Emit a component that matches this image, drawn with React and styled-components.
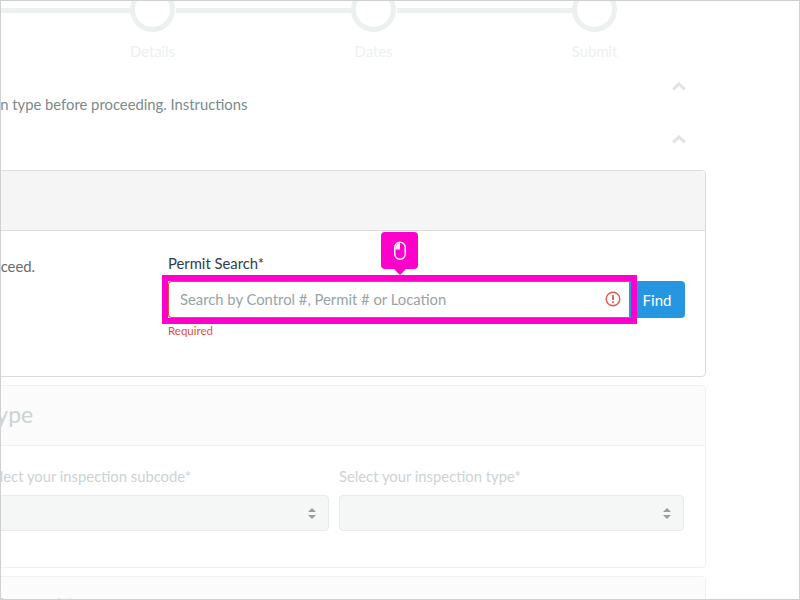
import React from "react";
import styled, { createGlobalStyle } from "styled-components";

const Global = createGlobalStyle`
  html, body { margin: 0; padding: 0; background: #fff; }
  body { font-family: Lato, "Liberation Sans", sans-serif; font-size: 14.8px; }
  * { box-sizing: border-box; }
`;

const Frame = styled.div`
  position: relative;
  width: 800px;
  height: 600px;
  overflow: hidden;
  border: 1px solid #d0d0d0;
  background: #fff;
`;
const Page = styled.div`
  width: 961px;
  margin-left: -256px;
  margin-top: -14px;
`;
const Stepper = styled.div`
  display: flex;
  padding-left: 76px;
`;
const Step = styled.div`
  position: relative;
  flex: 0 0 221px;
  display: flex;
  flex-direction: column;
  align-items: center;
  color: #ecf0f1;
  line-height: 20px;
`;
const Circle = styled.div`
  width: 45px;
  height: 45px;
  border-radius: 50%;
  border: 5px solid #ecf0f1;
  margin-bottom: 9px;
`;
const Connector = styled.div`
  position: absolute;
  left: calc(50% + 23px);
  width: 176px;
  top: 21px;
  height: 5px;
  background: #ecf0f1;
`;
const Accordion = styled.div`
  display: flex;
  align-items: flex-start;
  height: ${p => p.$height}px;
  margin-top: ${p => p.$top}px;
  padding-right: 20px;
`;
const Intro = styled.p`
  margin: 0 0 0 ${p => p.$indent}px;
  color: #7b8a8b;
  line-height: 20px;
  white-space: nowrap;
  padding-top: 7px;
`;
const ChevronBox = styled.span`
  display: block;
  width: 14px;
  margin-left: auto;
  color: #e3e3e3;
  margin-top: -11px;
`;
const Panel = styled.section`
  border: 1px solid ${p => (p.$faded ? "#eff1f1" : "#dcdcdc")};
  border-radius: 4px;
  margin-bottom: 8px;
  background: #fff;
`;
const PanelHeader = styled.header`
  height: 60px;
  background: ${p => (p.$faded ? "#fbfbfb" : "#f5f5f5")};
  border-bottom: 1px solid ${p => (p.$faded ? "#f0f1f1" : "#dcdcdc")};
  border-radius: 3px 3px 0 0;
  padding: 13px 14px;
  font-size: 23px;
  line-height: 30px;
  color: #ccd3d3;
  white-space: nowrap;
`;
const PermitBody = styled.div`
  height: 145px;
  display: flex;
  padding: 22px 20px 0 20px;
`;
const PermitHint = styled.p`
  margin: 3px 0 0 -58px;
  flex: 0 0 460px;
  color: #666e6e;
  line-height: 20px;
  white-space: nowrap;
`;
const Field = styled.div`
  flex: 1;
  min-width: 0;
`;
const Label = styled.label`
  display: block;
  color: ${p => (p.$faded ? "#ccd3d3" : "#2c3e50")};
  line-height: 20px;
  margin-bottom: ${p => (p.$faded ? "9px" : "8px")};
  white-space: nowrap;
`;
const SearchRow = styled.div`
  position: relative;
  display: flex;
  height: 37px;
`;
const InputShell = styled.div`
  flex: 1;
  min-width: 0;
  border: 1px solid #e74c3c;
  border-right: 0;
  border-radius: 4px 0 0 4px;
  background: #fff;
  display: flex;
  align-items: center;
  justify-content: space-between;
  padding: 0 8px 2px 11px;
  color: #95a5a6;
  white-space: nowrap;
`;
const Find = styled.button`
  flex: 0 0 56px;
  border: 0;
  border-radius: 0 4px 4px 0;
  background: #2696e0;
  color: #fff;
  font: 400 15px Lato, sans-serif;
  padding: 0;
`;
const Spotlight = styled.div`
  position: absolute;
  left: -6px;
  top: -6px;
  width: 475px;
  height: 49px;
  border: 6px solid #ff00cc;
  pointer-events: none;
`;
const Pin = styled.div`
  position: absolute;
  left: 213px;
  top: -49px;
  width: 37px;
  height: 37px;
  border-radius: 4px;
  background: #ff00cc;
  display: flex;
  align-items: center;
  justify-content: center;
  &::after {
    content: "";
    position: absolute;
    left: 13px;
    bottom: -6px;
    border: 6px solid transparent;
    border-bottom: 0;
    border-top-color: #ff00cc;
  }
`;
const Required = styled.div`
  margin-top: 6px;
  color: #e74c3c;
  font-size: 11.5px;
  line-height: 14px;
`;
const DetailBody = styled.div`
  height: 121px;
  display: grid;
  grid-template-columns: 208px 345px 345px;
  column-gap: 10px;
  padding: 20px 0 0 20px;
`;
const FadedSelect = styled.div`
  height: 36px;
  border: 1px solid #e8ebeb;
  border-radius: 4px;
  background: #f5f7f7;
  display: flex;
  align-items: center;
  justify-content: flex-end;
  padding-right: 12px;
`;
const NextTitle = styled.div`
  height: 60px;
  background: #fbfbfb;
  padding: 16px 20px;
  color: #ccd3d3;
  line-height: 20px;
  white-space: nowrap;
`;

const Chevron = () => (
  <svg width="14" height="9" viewBox="0 0 14 9" fill="none" stroke="currentColor" strokeWidth="3">
    <path d="M1.2 7.4 7 2l5.8 5.4" />
  </svg>
);
const Updown = () => (
  <svg width="8" height="11" viewBox="0 0 8 11" fill="#999c9c">
    <path d="M4 0 8 4H0zM4 11 0 7h8z" />
  </svg>
);
const MouseIcon = () => (
  <svg width="14" height="20" viewBox="0 0 14 20" fill="none" stroke="#fff" strokeWidth="1.5">
    <rect x="1.75" y="1.25" width="10.5" height="17" rx="5.2" />
    <path d="M2.5 8.5h4.5V2C4.5 2 2.5 4.2 2.5 7z" fill="#fff" stroke="none" opacity="0.9" />
  </svg>
);
const AlertIcon = () => (
  <svg width="16" height="16" viewBox="0 0 16 16" fill="none" stroke="#e8584a" strokeWidth="1.4">
    <circle cx="8" cy="8" r="6.8" />
    <path d="M8 4v5M8 10.3v1.7" strokeWidth="1.8" />
  </svg>
);

export default function App() {
  const steps = ["Permit", "Details", "Dates", "Submit"];
  return (
    <Frame>
      <Global />
      <Page>
        <Stepper>
          {steps.map((s, i) => (
            <Step key={s}>
              <Circle />
              {i < 3 && <Connector />}
              {s}
            </Step>
          ))}
        </Stepper>
        <Accordion $top={26} $height={53}>
          <Intro $indent={24}>Please select a permit and inspection type before proceeding. Instructions</Intro>
          <ChevronBox><Chevron /></ChevronBox>
        </Accordion>
        <Accordion $top={0} $height={30}>
          <ChevronBox><Chevron /></ChevronBox>
        </Accordion>
        <Panel>
          <PanelHeader />
          <PermitBody>
            <PermitHint>Please search for a permit before you can proceed.</PermitHint>
            <Field>
              <Label>Permit Search*</Label>
              <SearchRow>
                <InputShell>
                  Search by Control #, Permit # or Location
                  <AlertIcon />
                </InputShell>
                <Find>Find</Find>
                <Spotlight />
                <Pin><MouseIcon /></Pin>
              </SearchRow>
              <Required>Required</Required>
            </Field>
          </PermitBody>
        </Panel>
        <Panel $faded>
          <PanelHeader $faded>Select your inspection type</PanelHeader>
          <DetailBody>
            <div>
              <Label $faded>Select a code*</Label>
              <FadedSelect />
            </div>
            <div>
              <Label $faded>Select your inspection subcode*</Label>
              <FadedSelect><Updown /></FadedSelect>
            </div>
            <div>
              <Label $faded>Select your inspection type*</Label>
              <FadedSelect><Updown /></FadedSelect>
            </div>
          </DetailBody>
        </Panel>
        <Panel $faded>
          <NextTitle>Select the inspection time available for your date</NextTitle>
        </Panel>
      </Page>
    </Frame>
  );
}
